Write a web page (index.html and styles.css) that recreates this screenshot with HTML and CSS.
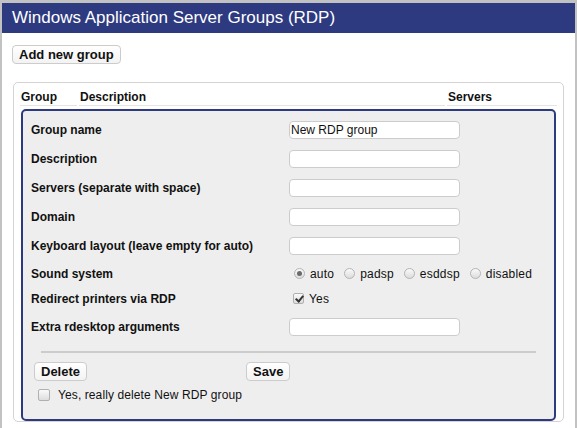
FILE: index.html
```html
<!DOCTYPE html>
<html>
<head>
<meta charset="utf-8">
<title>Windows Application Server Groups (RDP)</title>
<link rel="stylesheet" href="styles.css">
</head>
<body>
<div class="titlebar">Windows Application Server Groups (RDP)</div>
<div class="content">
  <button class="btn add-btn" type="button">Add new group</button>
  <div class="box">
    <table class="groups">
      <thead>
        <tr>
          <th class="c-group">Group</th>
          <th class="c-desc">Description</th>
          <th class="c-srv">Servers</th>
        </tr>
      </thead>
      <tbody>
        <tr>
          <td colspan="3" class="panel-cell">
            <div class="panel">
              <div class="form">
                <div class="lbl r-in">Group name</div>
                <div class="val r-in"><input class="txt" type="text" value="New RDP group"></div>

                <div class="lbl r-in">Description</div>
                <div class="val r-in"><input class="txt" type="text" value=""></div>

                <div class="lbl r-in">Servers (separate with space)</div>
                <div class="val r-in"><input class="txt" type="text" value=""></div>

                <div class="lbl r-in">Domain</div>
                <div class="val r-in"><input class="txt" type="text" value=""></div>

                <div class="lbl r-in">Keyboard layout (leave empty for auto)</div>
                <div class="val r-in"><input class="txt" type="text" value=""></div>

                <div class="lbl r-sound">Sound system</div>
                <div class="val r-sound radios">
                  <label class="opt"><input class="radio" type="radio" name="snd" checked>auto</label>
                  <label class="opt"><input class="radio" type="radio" name="snd">padsp</label>
                  <label class="opt"><input class="radio" type="radio" name="snd">esddsp</label>
                  <label class="opt"><input class="radio" type="radio" name="snd">disabled</label>
                </div>

                <div class="lbl r-redir">Redirect printers via RDP</div>
                <div class="val r-redir"><label class="opt"><input class="check" type="checkbox" checked>Yes</label></div>

                <div class="lbl r-extra">Extra rdesktop arguments</div>
                <div class="val r-extra"><input class="txt" type="text" value=""></div>
              </div>
              <div class="sep"></div>
              <div class="actions">
                <button class="btn" type="button">Delete</button>
                <button class="btn" type="button">Save</button>
              </div>
              <label class="confirm"><input class="check" type="checkbox">Yes, really delete New RDP group</label>
            </div>
          </td>
        </tr>
      </tbody>
    </table>
  </div>
</div>
</body>
</html>
```

FILE: styles.css
```css
html {
  background: #c2c2c2;
}

body {
  margin: 3px 2px 0 2px;
  background: #ffffff;
  min-height: 425px;
  font-family: "Liberation Sans", Arial, sans-serif;
  font-size: 12px;
  color: #111111;
}

.titlebar {
  background: #2d3a7f;
  color: #ffffff;
  height: 30px;
  line-height: 30px;
  padding-left: 10px;
  font-size: 17px;
}

.content {
  padding: 12px 10px 0 10px;
}

.btn {
  font-family: "Liberation Sans", Arial, sans-serif;
  font-weight: bold;
  font-size: 13px;
  color: #111111;
  height: 19px;
  line-height: 17px;
  padding: 0 6px;
  border: 1px solid #cccccc;
  border-radius: 4px;
  background: linear-gradient(#ffffff, #f3f3f3);
  margin: 0;
}

.add-btn {
  display: block;
}

.box {
  margin: 18px 1px 0 1px;
  border: 1px solid #d4d4d4;
  border-radius: 5px;
  padding: 6px 4px 0 4px;
}

.groups {
  border-collapse: separate;
  border-spacing: 2px 0;
  width: 541px;
}

.groups th {
  text-align: left;
  font-weight: bold;
  font-size: 12px;
  line-height: 16px;
  padding: 0 1px;
  border-bottom: 1px solid #e4e4e4;
}

.c-group { width: 55px; }
.c-srv { width: 108px; }

.panel-cell {
  padding: 3px 1px 0 1px;
}

.panel {
  border: 2px solid #2d3a7f;
  border-radius: 5px;
  background: #eeeeee;
  padding: 4px 0 16px 0;
}

.form {
  display: grid;
  grid-template-columns: 266px 1fr;
}

.lbl {
  font-weight: bold;
  padding-left: 8px;
  display: flex;
  align-items: center;
}

.val {
  display: flex;
  align-items: center;
}

.r-in { height: 29px; }
.r-sound { height: 27px; }
.r-redir { height: 23px; }
.r-extra { height: 33px; }

.txt {
  box-sizing: border-box;
  width: 171px;
  height: 18px;
  border: 1px solid #cccccc;
  border-radius: 4px;
  background: #ffffff;
  padding: 0 1px;
  margin: 0;
  font-family: "Liberation Sans", Arial, sans-serif;
  font-size: 12px;
  color: #111111;
  outline: none;
}

.opt {
  display: inline-flex;
  align-items: center;
  font-weight: normal;
  letter-spacing: 0.2px;
}

.radios .opt + .opt {
  margin-left: 5px;
}

.radio {
  -webkit-appearance: none;
  appearance: none;
  box-sizing: border-box;
  width: 11px;
  height: 11px;
  border-radius: 50%;
  border: 1px solid #b4b4b4;
  background: linear-gradient(#fafafa, #dcdcdc);
  margin: 0 5px 0 5px;
  position: relative;
}

.radio:checked::after {
  content: "";
  position: absolute;
  left: 2px;
  top: 2px;
  width: 5px;
  height: 5px;
  border-radius: 50%;
  background: #6a6a6a;
}

.check {
  -webkit-appearance: none;
  appearance: none;
  box-sizing: border-box;
  width: 11px;
  height: 11px;
  border-radius: 2px;
  border: 1px solid #b0b0b0;
  background: linear-gradient(#fafafa, #dddddd);
  margin: 0 5px 0 4px;
  position: relative;
}

.check:checked::after {
  content: "";
  position: absolute;
  left: 3px;
  top: 0px;
  width: 3px;
  height: 6px;
  border: solid #333333;
  border-width: 0 2px 2px 0;
  transform: rotate(40deg);
}

.sep {
  height: 2px;
  background: #cccccc;
  margin: 8px 18px 0 18px;
}

.actions {
  display: grid;
  grid-template-columns: 212px auto;
  justify-content: start;
  justify-items: start;
  padding-left: 11px;
  margin-top: 9px;
}

.confirm {
  display: flex;
  align-items: center;
  height: 16px;
  margin-top: 6px;
  padding-left: 11px;
  letter-spacing: 0.1px;
}

.confirm .check {
  width: 12px;
  height: 12px;
  margin: 0 8px 0 4px;
}
```
